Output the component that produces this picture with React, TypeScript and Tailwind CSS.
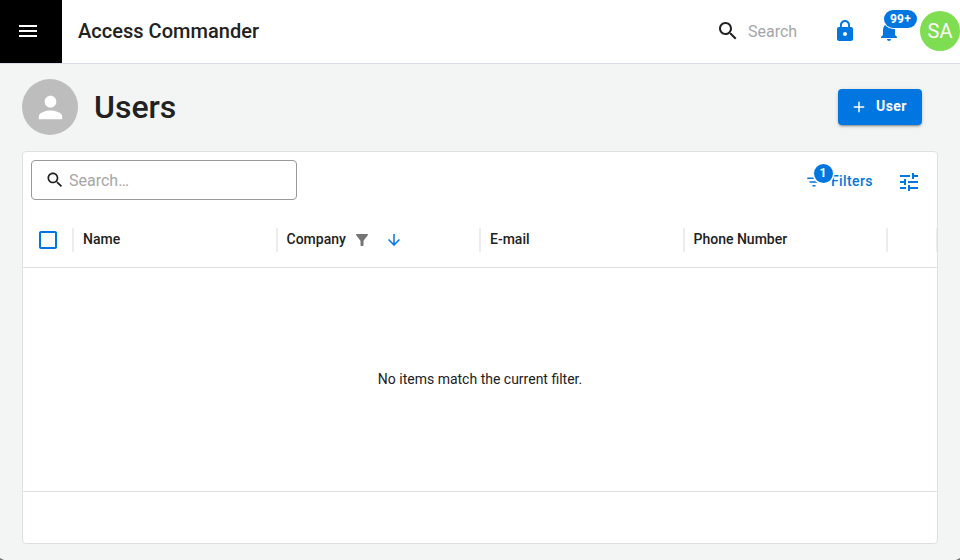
import React from "react";

const icons = {
  menu: "M3 18h18v-2H3v2zm0-5h18v-2H3v2zm0-7v2h18V6H3z",
  person:
    "M12 12c2.21 0 4-1.79 4-4s-1.79-4-4-4-4 1.79-4 4 1.79 4 4 4zm0 2c-2.67 0-8 1.34-8 4v2h16v-2c0-2.66-5.33-4-8-4z",
  search:
    "M15.5 14h-.79l-.28-.27C15.41 12.59 16 11.11 16 9.5 16 5.91 13.09 3 9.5 3S3 5.91 3 9.5 5.91 16 9.5 16c1.61 0 3.09-.59 4.23-1.57l.27.28v.79l5 4.99L20.49 19l-4.99-5zm-6 0C7.01 14 5 11.99 5 9.5S7.01 5 9.5 5 14 7.01 14 9.5 11.99 14 9.5 14z",
  lock: "M18 8h-1V6c0-2.76-2.24-5-5-5S7 3.24 7 6v2H6c-1.1 0-2 .9-2 2v10c0 1.1.9 2 2 2h12c1.1 0 2-.9 2-2V10c0-1.1-.9-2-2-2zm-6 9c-1.1 0-2-.9-2-2s.9-2 2-2 2 .9 2 2-.9 2-2 2zm3.1-9H8.9V6c0-1.71 1.39-3.1 3.1-3.1 1.71 0 3.1 1.39 3.1 3.1v2z",
  bell: "M12 22c1.1 0 2-.9 2-2h-4c0 1.1.89 2 2 2zm6-6v-5c0-3.07-1.64-5.64-4.5-6.32V4c0-.83-.67-1.5-1.5-1.5s-1.5.67-1.5 1.5v.68C7.63 5.36 6 7.92 6 11v5l-2 2v1h16v-1l-2-2z",
  add: "M19 13h-6v6h-2v-6H5v-2h6V5h2v6h6v2z",
  filterList: "M10 18h4v-2h-4v2zM3 6v2h18V6H3zm3 7h12v-2H6v2z",
  tune: "M3 17v2h6v-2H3zM3 5v2h10V5H3zm10 16v-2h8v-2h-8v-2h-2v6h2zM7 9v2H3v2h4v2h2V9H7zm14 4v-2H11v2h10zm-6-4h2V7h4V5h-4V3h-2v6z",
  checkbox:
    "M19 5v14H5V5h14m0-2H5c-1.1 0-2 .9-2 2v14c0 1.1.9 2 2 2h14c1.1 0 2-.9 2-2V5c0-1.1-.9-2-2-2z",
  funnel:
    "M4.25 5.61C6.27 8.2 10 13 10 13v6c0 .55.45 1 1 1h2c.55 0 1-.45 1-1v-6s3.72-4.8 5.74-7.39c.51-.66.04-1.61-.79-1.61H5.04c-.83 0-1.3.95-.79 1.61z",
  arrowDown: "M20 12l-1.41-1.41L13 16.17V4h-2v12.17l-5.58-5.59L4 12l8 8 8-8z",
};

function Icon({ name, className }: { name: keyof typeof icons; className: string }) {
  return (
    <svg viewBox="0 0 24 24" fill="currentColor" className={`shrink-0 ${className}`}>
      <path d={icons[name]} />
    </svg>
  );
}

function Column({ label, children }: { label: string; children?: React.ReactNode }) {
  return (
    <div className="flex h-14 w-[203.5px] shrink-0 items-center">
      <div className="h-6 w-0.5 bg-[#ececec]" />
      <span className="-mt-0.5 ml-[9px] text-sm font-medium">{label}</span>
      {children}
    </div>
  );
}

export default function App() {
  return (
    <div className="relative flex h-[560px] w-[960px] flex-col overflow-hidden bg-[#f3f5f5] font-['Roboto','Liberation_Sans',sans-serif] text-[#212121]">
      <header className="flex h-16 shrink-0 items-stretch border-b border-[#d9dde9] bg-white">
        <button className="flex w-[62px] items-center bg-black pb-px pl-4 text-white">
          <Icon name="menu" className="size-6" />
        </button>
        <div className="flex grow items-center pb-px pl-4">
          <h1 className="text-xl font-medium tracking-[0.03px]">Access Commander</h1>
          <div className="ml-auto flex items-center">
            <Icon name="search" className="size-6" />
            <span className="ml-2 w-[85px] pt-0.5 text-base text-[#a6a6a6]">Search</span>
            <Icon name="lock" className="size-6 text-[#0077e0]" />
            <div className="relative ml-5 text-[#0077e0]">
              <Icon name="bell" className="size-6" />
              <span className="absolute -top-[9px] left-[7px] flex h-[18px] w-[33px] items-center justify-center rounded-full bg-[#0077e0] text-xs font-bold tracking-[0.2px] text-white ring-1 ring-white">
                99+
              </span>
            </div>
            <div className="ml-[19px] flex size-10 items-center justify-center rounded-full bg-[#7fdd52] text-xl text-white">
              SA
            </div>
          </div>
        </div>
      </header>

      <div className="mt-[15px] flex h-14 shrink-0 items-center pr-[38px] pl-[22px]">
        <div className="flex size-14 items-center justify-center rounded-full bg-[#bdbdbd] text-white">
          <Icon name="person" className="size-[35px]" />
        </div>
        <h2 className="ml-4 text-[32px] leading-10 font-medium">Users</h2>
        <button className="ml-auto flex h-9 w-[84px] items-center rounded bg-[#0077e0] pl-3 text-white shadow-[0_3px_1px_-2px_rgba(0,0,0,0.2),0_2px_2px_0_rgba(0,0,0,0.14),0_1px_5px_0_rgba(0,0,0,0.12)]">
          <Icon name="add" className="size-[18px]" />
          <span className="-mt-0.5 ml-2 text-sm font-bold tracking-[0.4px]">User</span>
        </button>
      </div>

      <main className="mx-[22px] mt-4 flex h-[393px] shrink-0 flex-col overflow-hidden rounded border border-[#e0e0e0] bg-white">
        <div className="flex h-[60px] shrink-0 items-start pt-2 pr-4 pl-2">
          <div className="flex h-10 w-[266px] items-center rounded border border-[#999] pl-[13px]">
            <Icon name="search" className="size-5" />
            <span className="ml-1 pt-0.5 text-base text-[#a6a6a6]">Search…</span>
          </div>
          <div className="mt-[10px] ml-auto flex items-center text-[#0077e0]">
            <div className="relative z-10">
              <Icon name="filterList" className="size-[18px]" />
              <span className="absolute -top-[9.5px] left-[8.5px] flex size-[19px] items-center justify-center rounded-full bg-[#0077e0] text-xs font-bold text-white ring-[1.5px] ring-white">
                1
              </span>
            </div>
            <span className="-mt-0.5 ml-2 w-[66px] text-sm font-medium tracking-[0.4px]">Filters</span>
            <Icon name="tune" className="size-6" />
          </div>
        </div>

        <div className="flex h-14 shrink-0 items-center border-b border-[#e0e0e0]">
          <div className="flex w-[49px] shrink-0 pl-[13px] text-[#0077e0]">
            <Icon name="checkbox" className="size-6" />
          </div>
          <Column label="Name" />
          <Column label="Company">
            <Icon name="funnel" className="ml-[7px] size-[18px] text-[#757575]" />
            <Icon name="arrowDown" className="ml-3.5 size-[18px] text-[#0077e0]" />
          </Column>
          <Column label="E-mail" />
          <Column label="Phone Number" />
          <div className="flex grow justify-between">
            <div className="h-6 w-0.5 bg-[#ececec]" />
            <div className="h-6 w-px bg-[#ececec]" />
          </div>
        </div>

        <div className="flex grow items-center justify-center pb-0.5 text-sm">
          No items match the current filter.
        </div>
        <div className="h-[52px] shrink-0 border-t border-[#e0e0e0]" />
      </main>

      {/* Rounded window corners */}
      <div className="absolute bottom-0 left-0 h-0.5 w-1 bg-[#777] [clip-path:polygon(0_0,0_100%,100%_100%)]" />
      <div className="absolute right-0 bottom-0 h-0.5 w-1 bg-[#777] [clip-path:polygon(100%_0,0_100%,100%_100%)]" />
    </div>
  );
}
